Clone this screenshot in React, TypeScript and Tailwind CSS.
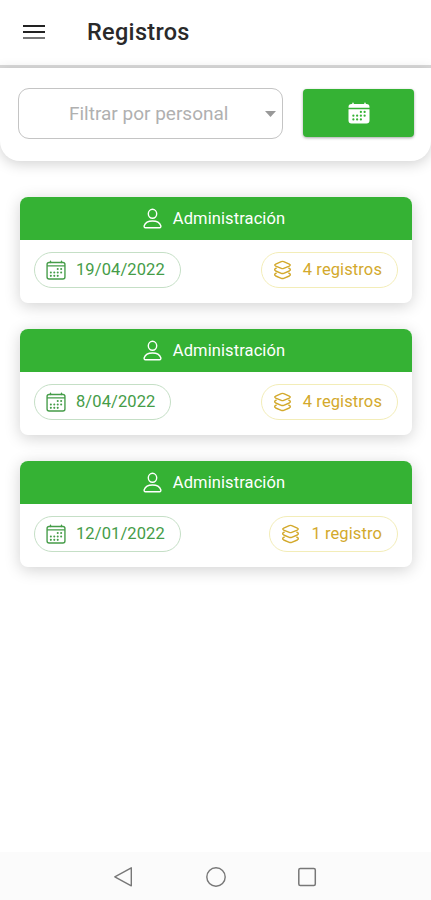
import React from 'react';
import { IoCalendar, IoCalendarOutline } from 'react-icons/io5';

type Registro = {
  id: number;
  personal: string;
  fecha: string;
  cantidad: number;
};

const registros: Registro[] = [
  { id: 1, personal: 'Administración', fecha: '19/04/2022', cantidad: 4 },
  { id: 2, personal: 'Administración', fecha: '8/04/2022', cantidad: 4 },
  { id: 3, personal: 'Administración', fecha: '12/01/2022', cantidad: 1 },
];

const IconoPersona: React.FC = () => (
  <svg width="20" height="22" viewBox="0 0 20 22" fill="none" stroke="currentColor" strokeWidth="1.400" strokeLinejoin="round">
    <ellipse cx="9.500" cy="5.800" rx="4.200" ry="4.500" />
    <path d="M9.500 13c-4 0-7.300 1.700-8.300 4.800-.3 1 .2 1.900 1.200 1.900h14.200c1 0 1.500-.9 1.200-1.900-1-3.100-4.300-4.800-8.300-4.800z" />
  </svg>
);

const IconoCapas: React.FC = () => (
  <svg
    width="20"
    height="20"
    viewBox="0 0 20 20"
    fill="none"
    stroke="currentColor"
    strokeWidth="1.400"
    strokeLinejoin="round"
    strokeLinecap="round"
  >
    <path d="M8.300 1.600 2.700 4.100q-1.900 1 0 2l5.600 2.300q1.200.5 2.400 0l5.600-2.300q1.900-1 0-2l-5.600-2.500q-1.200-.5-2.400 0z" />
    <path d="M3.200 8.200l-.8.500q-1.600 1.100.3 2.300l5.600 2.300q1.200.5 2.400 0l5.600-2.300q1.900-1.200.3-2.300l-.8-.5" />
    <path d="M3.200 13.200l-.8.500q-1.600 1.100.3 2.300l5.600 2.300q1.200.5 2.400 0l5.600-2.300q1.900-1.200.3-2.300l-.8-.5" />
  </svg>
);

const Header: React.FC = () => (
  <header className="h-[68px] shrink-0 border-b-[3px] border-[#dadada] bg-white flex items-center pl-[23px]">
    <button type="button" aria-label="Menú" className="flex flex-col gap-1 mb-px">
      <span className="block w-[22px] h-[2px] bg-[#222]" />
      <span className="block w-[22px] h-[2px] bg-[#222]" />
      <span className="block w-[22px] h-[2px] bg-[#777]" />
    </button>
    <h1 className="ml-[42px] mb-0.5 text-[23.500px] leading-7 font-medium tracking-[0.3px] text-[#2a2a2a]">Registros</h1>
  </header>
);

const Filtros: React.FC = () => (
  <section className="h-[93px] shrink-0 bg-white rounded-b-[20px] shadow-[0_3px_14px_rgba(0,0,0,0.18)] flex items-start justify-between pt-5 pl-[18px] pr-[17px]">
    <button
      type="button"
      className="w-[265px] h-[51px] border border-[#c4c4c4] rounded-[11px] flex items-center justify-between pl-[50px] pr-[6px] text-[19px] tracking-normal text-[#b0b0b0]"
    >
      <span>Filtrar por personal</span>
      <svg width="11" height="6" viewBox="0 0 11 6" fill="#999">
        <path d="M0 0h11L5.500 6z" />
      </svg>
    </button>
    <button
      type="button"
      aria-label="Fecha"
      className="w-[111px] h-[48px] mt-px bg-[#35b234] rounded text-white shadow-[0_1px_3px_rgba(0,0,0,0.35)] flex items-center justify-center"
    >
      <IoCalendar size={24} />
    </button>
  </section>
);

const Tarjeta: React.FC<{ registro: Registro }> = ({ registro }) => (
  <article className="h-[106px] bg-white rounded-lg overflow-hidden shadow-[0_3px_16px_rgba(0,0,0,0.18)]">
    <div className="h-[43px] bg-[#35b234] text-white flex items-center justify-center gap-2.5 pr-1">
      <IconoPersona />
      <span>{registro.personal}</span>
    </div>
    <div className="flex justify-between pt-3 pl-3.5 pr-3.5">
      <div className="h-9 border border-[#c5dfc6] rounded-full flex items-center gap-[9px] pl-2.5 pr-[15px] text-[#459c48]">
        <IoCalendarOutline size={22} />
        <span>{registro.fecha}</span>
      </div>
      <div className="h-9 border border-[#f3edb8] rounded-full flex items-center gap-2.5 pl-[11px] pr-[15px] text-[#d3a92c]">
        <IconoCapas />
        <span>
          {registro.cantidad} {registro.cantidad === 1 ? 'registro' : 'registros'}
        </span>
      </div>
    </div>
  </article>
);

const BarraNavegacion: React.FC = () => (
  <nav className="h-12 shrink-0 bg-[#fbfbfb] flex items-center justify-center gap-[71px] pt-[2px] text-[#777]">
    <svg width="20" height="22" viewBox="0 0 20 22" fill="none" stroke="currentColor" strokeWidth="1.400" strokeLinejoin="round">
      <path d="M17.300 1.800v18L.8 10.800z" />
    </svg>
    <svg width="22" height="22" viewBox="0 0 22 22" fill="none" stroke="currentColor" strokeWidth="1.400">
      <circle cx="11" cy="11" r="9.200" />
    </svg>
    <svg width="20" height="22" viewBox="0 0 20 22" fill="none" stroke="currentColor" strokeWidth="1.500">
      <rect x="0.800" y="2.500" width="16.500" height="17" rx="1.500" />
    </svg>
  </nav>
);

const App: React.FC = () => {
  return (
    <div className="h-[900px] w-[431px] bg-white flex flex-col overflow-hidden font-['Roboto',sans-serif] text-[16.500px] leading-6 tracking-[0.1px]">
      <Header />
      <Filtros />
      <main className="flex-1 flex flex-col gap-[26px] pt-9 pl-5 pr-[19px]">
        {registros.map((registro) => (
          <Tarjeta key={registro.id} registro={registro} />
        ))}
      </main>
      <BarraNavegacion />
    </div>
  );
};

export default App;
